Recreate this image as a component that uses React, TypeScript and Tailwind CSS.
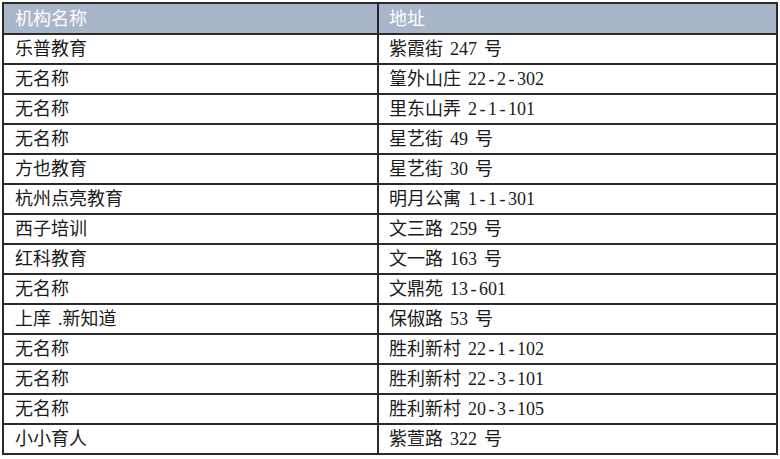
import React from "react";

const rows: [string, string][] = [
  ["乐普教育", "紫霞街 247 号"],
  ["无名称", "篁外山庄 22-2-302"],
  ["无名称", "里东山弄 2-1-101"],
  ["无名称", "星艺街 49 号"],
  ["方也教育", "星艺街 30 号"],
  ["杭州点亮教育", "明月公寓 1-1-301"],
  ["西子培训", "文三路 259 号"],
  ["红科教育", "文一路 163 号"],
  ["无名称", "文鼎苑 13-601"],
  ["上庠 .新知道", "保俶路 53 号"],
  ["无名称", "胜利新村 22-1-102"],
  ["无名称", "胜利新村 22-3-101"],
  ["无名称", "胜利新村 20-3-105"],
  ["小小育人", "紫萱路 322 号"],
];

function Txt({ s }: { s: string }) {
  const parts: React.ReactNode[] = [];
  let buf = "";
  const flush = (k: number) => {
    if (buf) {
      parts.push(<span key={"t" + k}>{buf}</span>);
      buf = "";
    }
  };
  for (let i = 0; i < s.length; i++) {
    const c = s[i];
    if (c === " ") {
      flush(i);
      parts.push(
        <span key={i} className="inline-block w-[7px]">
          {"\u00a0"}
        </span>
      );
    } else if (c === "-") {
      flush(i);
      parts.push(
        <span key={i} className="inline-block w-[11px] text-center">
          -
        </span>
      );
    } else buf += c;
  }
  flush(s.length);
  return <>{parts}</>;
}

export default function App() {
  return (
    <div
      className="w-[780px] h-[459px] bg-white pt-[2px] pl-[2px]"
      style={{ fontFamily: '"Liberation Serif", "Noto Sans CJK SC", serif' }}
    >
      <table className="w-[776px] border-collapse border-2 border-[#2a2a2a] table-fixed">
        <colgroup>
          <col className="w-[375px]" />
          <col />
        </colgroup>
        <thead>
          <tr className="h-[31px] bg-[#a9b5c9] text-white">
            <th className="border-2 border-[#2a2a2a] text-left font-normal text-[18px] pl-[11px] p-0 leading-none">
              机构名称
            </th>
            <th className="border-2 border-[#2a2a2a] text-left font-normal text-[18px] pl-[10px] p-0 leading-none">
              地址
            </th>
          </tr>
        </thead>
        <tbody>
          {rows.map(([a, b], i) => (
            <tr key={i} className="h-[30px] text-[#1a1a1a]">
              <td className="border-2 border-[#2a2a2a] text-[18px] pl-[11px] p-0 leading-none whitespace-nowrap">
                <Txt s={a} />
              </td>
              <td className="border-2 border-[#2a2a2a] text-[18px] pl-[10px] p-0 leading-none whitespace-nowrap">
                <Txt s={b} />
              </td>
            </tr>
          ))}
        </tbody>
      </table>
    </div>
  );
}
